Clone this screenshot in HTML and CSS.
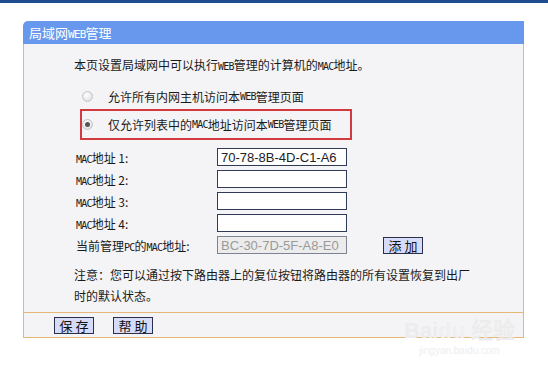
FILE: index.html
```html
<!DOCTYPE html>
<html lang="zh-CN">

<head>
  <meta charset="UTF-8">
  <title>局域网WEB管理</title>
  <link rel="stylesheet" href="styles.css">
</head>

<body>
  <div class="topbar"></div>

  <div class="panel">
    <div class="panel-title">局域网<span class="mini">WEB</span>管理</div>

    <div class="panel-body">
      <p class="intro">本页设置局域网中可以执行<span class="mini">WEB</span>管理的计算机的<span class="mini">MAC</span>地址。</p>

      <div class="radios">
        <label class="radio-row">
          <span class="radio"></span>
          允许所有内网主机访问本<span class="mini">WEB</span>管理页面
        </label>
        <label class="radio-row marked">
          <span class="radio checked"></span>
          仅允许列表中的<span class="mini">MAC</span>地址访问本<span class="mini">WEB</span>管理页面
        </label>
      </div>

      <div class="mac-grid">
        <span class="mac-label"><span class="mini">MAC</span>地址 1:</span>
        <input class="mac-input" type="text" value="70-78-8B-4D-C1-A6">
        <span></span>

        <span class="mac-label"><span class="mini">MAC</span>地址 2:</span>
        <input class="mac-input" type="text">
        <span></span>

        <span class="mac-label"><span class="mini">MAC</span>地址 3:</span>
        <input class="mac-input" type="text">
        <span></span>

        <span class="mac-label"><span class="mini">MAC</span>地址 4:</span>
        <input class="mac-input" type="text">
        <span></span>

        <span class="mac-label">当前管理<span class="mini">PC</span>的<span class="mini">MAC</span>地址:</span>
        <input class="mac-input readonly" type="text" value="BC-30-7D-5F-A8-E0" readonly>
        <button class="btn add-btn" type="button">添 加</button>
      </div>

      <p class="note">注意：您可以通过按下路由器上的复位按钮将路由器的所有设置恢复到出厂时的默认状态。</p>
    </div>

    <div class="panel-foot">
      <button class="btn" type="button">保 存</button>
      <button class="btn" type="button">帮 助</button>
    </div>
  </div>

  <div class="watermark">
    <div class="wm-logo">Bai<span class="wm-du">du</span> 经验</div>
    <div class="wm-url">jingyan.baidu.com</div>
  </div>
</body>

</html>
```

FILE: styles.css
```css
:root {
  --frame: #e6b877;
  --title-blue: #6898ee;
  --panel-bg: #f4f4f6;
  --btn-bg: #d7dbfa;
  --ink: #1a1a1a;
}

* {
  box-sizing: border-box;
}

body {
  margin: 0;
  background: #fff;
  font-family: "Noto Sans CJK SC", "DejaVu Sans", sans-serif;
  font-size: 12px;
  color: var(--ink);
  position: relative;
  height: 375px;
  overflow: hidden;
}

.topbar {
  height: 3px;
  background: #1d4d8d;
}

.mini {
  font-family: "DejaVu Sans Mono", monospace;
  font-size: 10px;
  letter-spacing: -0.8px;
}

.panel {
  width: 501px;
  margin: 18px 0 0 23px;
}

.panel-title {
  height: 23px;
  line-height: 23px;
  padding-left: 6px;
  background: var(--title-blue);
  color: #fff;
  font-size: 13px;
  border-radius: 5px 0 0 0;
}

.panel-title .mini {
  font-size: 11px;
}

.panel-body {
  height: 268px;
  background: var(--panel-bg);
  border-left: 1px solid var(--frame);
  border-right: 1px solid var(--frame);
  padding: 11px 0 0 50px;
}

.intro {
  margin: 0;
  line-height: 20px;
}

.radios {
  margin: 6px 0 0 6px;
}

.radio-row {
  display: flex;
  align-items: center;
  height: 26px;
  width: 272px;
  border: 2px solid transparent;
}

.radio-row.marked {
  height: 31px;
  border-color: #d23a3f;
}

.radio {
  width: 11px;
  height: 11px;
  margin-right: 15px;
  border-radius: 50%;
  border: 1px solid #c4c4c4;
  background: radial-gradient(circle at 40% 35%, #ffffff 0%, #e8e8e8 60%, #d2d2d2 100%);
  position: relative;
}

.radio.checked::after {
  content: '';
  position: absolute;
  left: 2px;
  top: 2px;
  width: 5px;
  height: 5px;
  border-radius: 50%;
  background: #555;
}

.mac-grid {
  display: grid;
  grid-template-columns: 141px 130px auto;
  grid-auto-rows: 22px;
  align-items: center;
  column-gap: 18px;
  margin: 6px 0 0 2px;
}

.mac-grid > :nth-child(3n + 2) {
  margin-left: -18px;
}

.mac-label {
  font-size: 12px;
  white-space: nowrap;
}

.mac-input {
  width: 130px;
  height: 18px;
  margin: 0;
  padding: 0 3px;
  border: 1px solid #2f3b57;
  background: #fff;
  font-family: "Liberation Sans", Arial, sans-serif;
  font-size: 13px;
  color: #222;
  outline: none;
}

.mac-input.readonly {
  background: #ececec;
  border-color: #7c8494;
  color: #9a9a9a;
}

.btn {
  width: 40px;
  height: 17px;
  margin: 0;
  padding: 0;
  border: 1px solid #2b2f4a;
  background: var(--btn-bg);
  font-family: "Noto Sans CJK SC", sans-serif;
  font-size: 13px;
  line-height: 15px;
  color: #111;
}

.add-btn {
  justify-self: start;
}

.note {
  width: 400px;
  margin: 8px 0 0 0;
  line-height: 21px;
}

.panel-foot {
  height: 26px;
  display: flex;
  align-items: center;
  gap: 19px;
  padding-left: 30px;
  background: var(--panel-bg);
  border: 1px solid var(--frame);
}

.watermark {
  position: absolute;
  left: 404px;
  top: 318px;
  color: #ececec;
  font-family: "Liberation Sans", sans-serif;
  text-align: center;
}

.wm-logo {
  font-size: 22px;
  font-weight: bold;
  line-height: 26px;
}

.wm-du {
  color: #efefef;
}

.wm-url {
  font-size: 10px;
  line-height: 14px;
  color: #eeeeee;
}
```
